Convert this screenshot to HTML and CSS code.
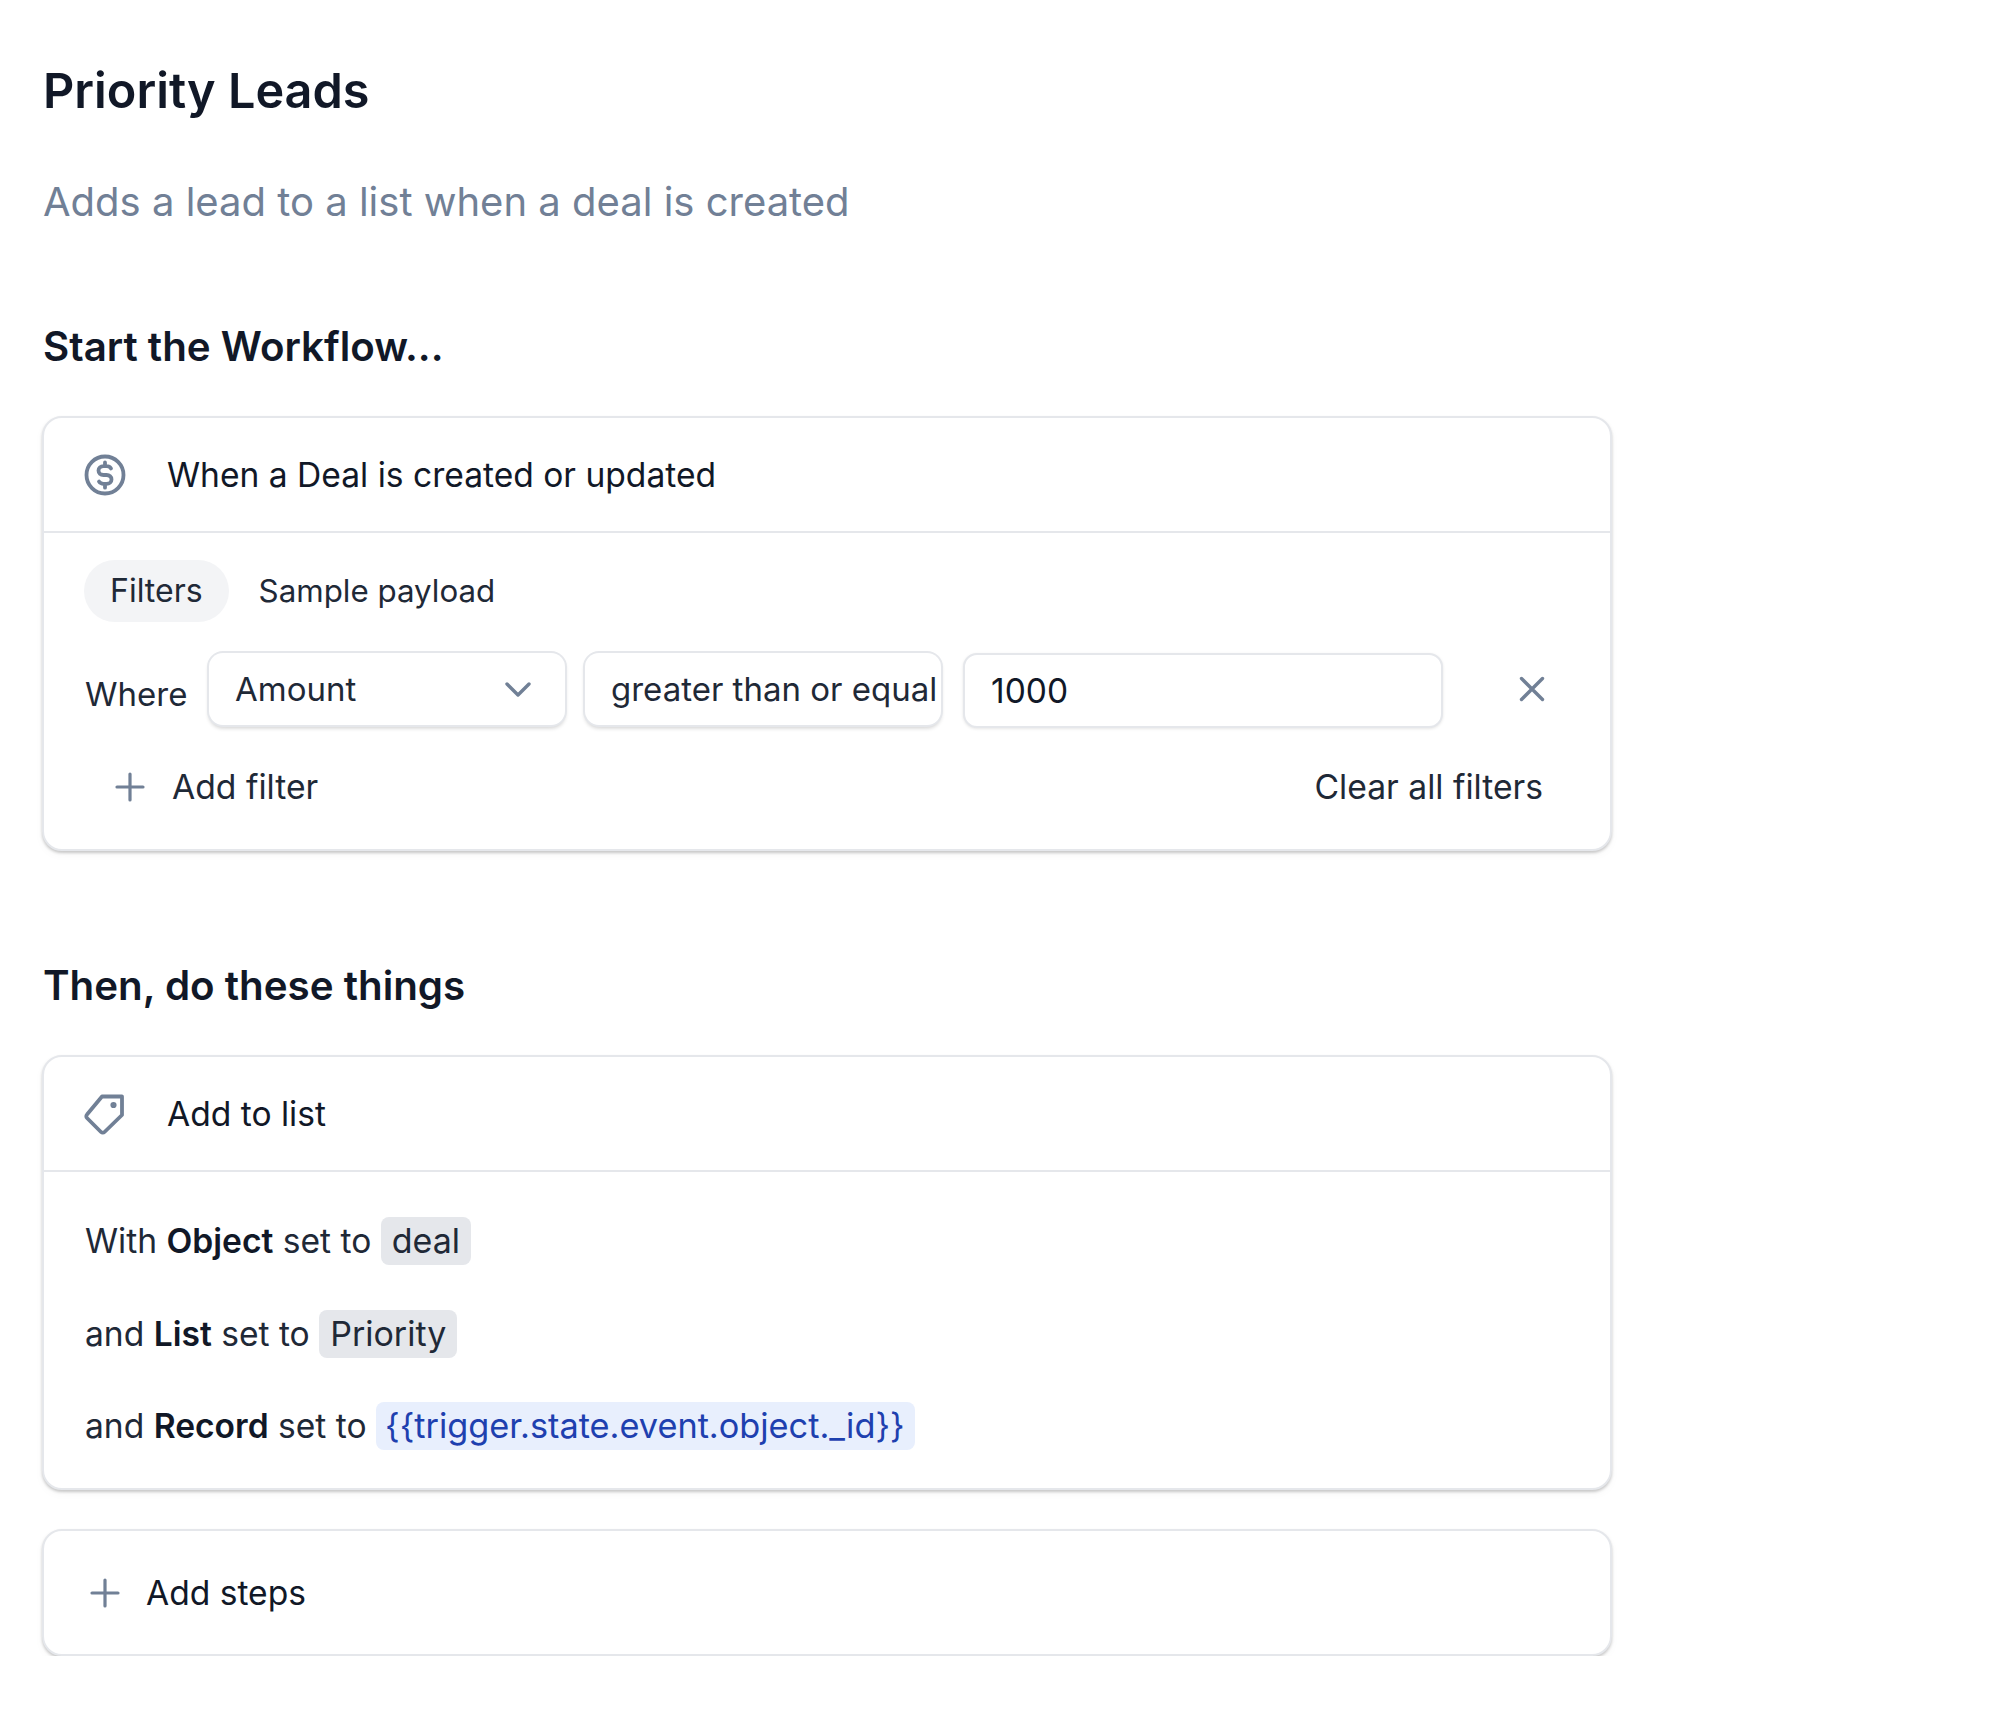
FILE: index.html
```html
<!DOCTYPE html>
<html lang="en">
<head>
<meta charset="utf-8">
<title>Priority Leads</title>
<link rel="stylesheet" href="styles.css">
</head>
<body>
<main class="page">
  <h1 class="title">Priority Leads</h1>
  <p class="subtitle">Adds a lead to a list when a deal is created</p>

  <h2 class="section section-first">Start the Workflow...</h2>
  <section class="card">
    <header class="card-head">
      <svg class="head-icon" viewBox="0 0 42 42" fill="none" stroke="#718096" stroke-width="3.8" stroke-linecap="round" stroke-linejoin="round"><circle cx="21" cy="21" r="18.5"/><path d="M27 14.5c-1-1.6-2.600-2.300-4.500-2.300h-3c-3 0-5 1.700-5 4.400s2 4.400 5 4.400h3c3 0 5 1.700 5 4.400s-2 4.400-5 4.400h-3c-2 0-3.500-.8-4.500-2.300M21 8.500v3.700M21 30v3.700"/></svg>
      <span>When a Deal is created or updated</span>
    </header>
    <div class="filter-body">
      <div class="tabs">
        <span class="tab tab-active">Filters</span>
        <span class="tab">Sample payload</span>
      </div>
      <div class="filter-row">
        <span class="where">Where</span>
        <div class="control select">
          <span>Amount</span>
          <svg class="chevron" viewBox="0 0 28 18" fill="none" stroke="#718096" stroke-width="3.400" stroke-linecap="round" stroke-linejoin="round"><path d="M3 4l11 11L25 4"/></svg>
        </div>
        <div class="control operator"><span>greater than or equal</span></div>
        <div class="control value"><span>1000</span></div>
        <svg class="remove" viewBox="0 0 28 28" fill="none" stroke="#718096" stroke-width="3.400" stroke-linecap="round"><path d="M3.500 3.500l21 21M24.500 3.500l-21 21"/></svg>
      </div>
      <div class="filter-foot">
        <span class="add-filter">
          <svg class="plus" viewBox="0 0 30 30" fill="none" stroke="#718096" stroke-width="3.200" stroke-linecap="round"><path d="M15 2v26M2 15h26"/></svg>
          Add filter
        </span>
        <span class="clear">Clear all filters</span>
      </div>
    </div>
  </section>

  <h2 class="section section-second">Then, do these things</h2>
  <section class="card">
    <header class="card-head">
      <svg class="head-icon" viewBox="0 0 42 42" fill="none" stroke="#718096" stroke-width="3.800" stroke-linecap="round" stroke-linejoin="round"><path d="M18 3.500h20v18.500L20.500 39a2.500 2.500 0 0 1-3.500 0L3 25a2.500 2.500 0 0 1 0-3.500z"/><circle cx="29.500" cy="12" r="1.200" fill="#718096"/></svg>
      <span>Add to list</span>
    </header>
    <div class="params">
      <p class="param">With <b>Object</b> set to <span class="chip">deal</span></p>
      <p class="param">and <b>List</b> set to <span class="chip">Priority</span></p>
      <p class="param">and <b>Record</b> set to <span class="chip chip-blue">{{trigger.state.event.object._id}}</span></p>
    </div>
  </section>

  <section class="card add-steps">
    <svg class="plus" viewBox="0 0 30 30" fill="none" stroke="#718096" stroke-width="3.200" stroke-linecap="round"><path d="M15 2v26M2 15h26"/></svg>
    <span>Add steps</span>
  </section>
</main>
</body>
</html>
```
FILE: styles.css
```css
* { box-sizing: border-box; }
html, body { margin: 0; background: #fff; }
body {
  font-family: Inter, "Liberation Sans", sans-serif;
  color: #111827;
  font-size: 33.6px;
}
.page { padding: 61px 0 0 42px; width: 1612px; }
.title { margin: 0 0 0 1px; font-size: 48.6px; line-height: 60px; font-weight: 600; }
.subtitle { margin: 57px 0 0 1px; font-size: 40px; line-height: 48px; color: #718096; }
.section { margin: 0 0 0 1px; font-size: 40.3px; line-height: 48px; font-weight: 600; }
.section-first { margin-top: 97px; margin-bottom: 45px; }
.section-second { margin-top: 111px; margin-bottom: 45px; }
.card {
  border: 2px solid #e5e7eb;
  border-radius: 20px;
  background: #fff;
  box-shadow: 0 2px 3px rgba(0, 0, 0, .2), 0 4px 10px rgba(0, 0, 0, .03);
}
.card-head {
  display: flex;
  align-items: center;
  gap: 41px;
  height: 115px;
  padding: 0 40px;
  border-bottom: 2px solid #e5e7eb;
}
.head-icon { width: 42px; height: 42px; flex: none; }
.filter-body { height: 316px; padding: 27px 40px 0; }
.tabs { display: flex; align-items: center; gap: 4px; height: 62px; font-size: 31.3px; color: #1f2937; }
.tab { padding: 0 26px; line-height: 62px; border-radius: 31px; }
.tab-active { background: #f3f4f6; font-size: 32px; }
.filter-row { display: flex; align-items: center; margin-top: 28px; }
.where { width: 123px; padding: 10px 0 0 1px; font-size: 33px; color: #1f2937; }
.control {
  display: flex;
  align-items: center;
  height: 72px;
  padding: 0 26px;
  border-radius: 14px;
  background: #fff;
  white-space: nowrap;
  overflow: hidden;
  font-size: 33px;
  color: #1f2937;
}
.select, .operator { box-shadow: 0 0 0 2px #e5e7eb, 0 3px 4px rgba(0, 0, 0, .2); margin: 0 0 0 2px; }
.select { width: 356px; justify-content: space-between; }
.chevron { width: 28px; height: 18px; margin-right: 7px; }
.operator { width: 356px; margin-left: 20px; padding-right: 0; }
.value { width: 480px; height: 75px; margin-left: 22px; margin-top: 3px; border: 2px solid #e5e7eb; box-shadow: 0 1px 3px rgba(0, 0, 0, .1); color: #111827; font-size: 33.5px; }
.remove { width: 28px; height: 28px; margin-left: 75px; }
.filter-foot { display: flex; align-items: center; justify-content: space-between; margin-top: 38px; padding: 0 27px 0 31px; font-size: 33.7px; color: #1f2937; }
.add-filter { display: flex; align-items: center; gap: 27px; }
.plus { width: 30px; height: 30px; flex: none; }
.params { height: 316px; padding: 45px 40px 0 41px; }
.param { margin: 0 0 44.5px; height: 48px; line-height: 48px; font-size: 33.6px; color: #1f2937; }
.param b { font-weight: 600; color: #111827; }
.chip { display: inline-block; height: 48px; padding: 0 11px; border-radius: 8px; background: #e5e7eb; font-size: 34px; }
.chip-blue { padding: 0 10px 0 9px; background: #e8effd; color: #1e40af; font-size: 34.3px; }
.add-steps { display: flex; align-items: center; gap: 26px; height: 127px; margin-top: 39px; padding: 0 46px; }
```
